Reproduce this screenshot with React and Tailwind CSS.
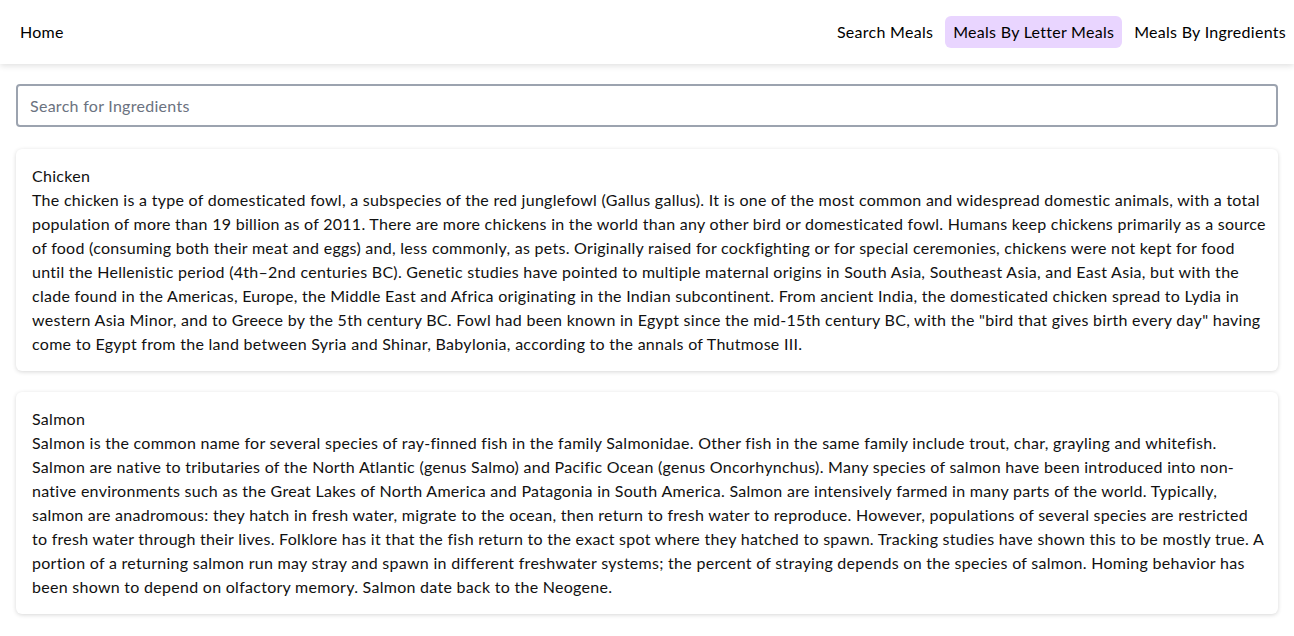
import React from "react";

const chicken = [
  "The chicken is a type of domesticated fowl, a subspecies of the red junglefowl (Gallus gallus). It is one of the most common and widespread domestic animals, with a total",
  "population of more than 19 billion as of 2011. There are more chickens in the world than any other bird or domesticated fowl. Humans keep chickens primarily as a source",
  "of food (consuming both their meat and eggs) and, less commonly, as pets. Originally raised for cockfighting or for special ceremonies, chickens were not kept for food",
  "until the Hellenistic period (4th\u20132nd centuries BC). Genetic studies have pointed to multiple maternal origins in South Asia, Southeast Asia, and East Asia, but with the",
  "clade found in the Americas, Europe, the Middle East and Africa originating in the Indian subcontinent. From ancient India, the domesticated chicken spread to Lydia in",
  "western Asia Minor, and to Greece by the 5th century BC. Fowl had been known in Egypt since the mid-15th century BC, with the \"bird that gives birth every day\" having",
  "come to Egypt from the land between Syria and Shinar, Babylonia, according to the annals of Thutmose III.",
];

const salmon = [
  "Salmon is the common name for several species of ray-finned fish in the family Salmonidae. Other fish in the same family include trout, char, grayling and whitefish.",
  "Salmon are native to tributaries of the North Atlantic (genus Salmo) and Pacific Ocean (genus Oncorhynchus). Many species of salmon have been introduced into non-",
  "native environments such as the Great Lakes of North America and Patagonia in South America. Salmon are intensively farmed in many parts of the world. Typically,",
  "salmon are anadromous: they hatch in fresh water, migrate to the ocean, then return to fresh water to reproduce. However, populations of several species are restricted",
  "to fresh water through their lives. Folklore has it that the fish return to the exact spot where they hatched to spawn. Tracking studies have shown this to be mostly true. A",
  "portion of a returning salmon run may stray and spawn in different freshwater systems; the percent of straying depends on the species of salmon. Homing behavior has",
  "been shown to depend on olfactory memory. Salmon date back to the Neogene.",
];

function Card({ title, lines }) {
  return (
    <div className="bg-white rounded-md shadow-[0_1px_4px_rgba(0,0,0,0.16)] px-4 py-[15px] text-[#111] text-base leading-6">
      <div>{title}</div>
      {lines.map((l, i) => (
        <div key={i} className="whitespace-nowrap">{l}</div>
      ))}
    </div>
  );
}

export default function App() {
  return (
    <div className="min-h-screen bg-white tracking-[0.28px]" style={{ fontFamily: "'Lato', 'Open Sans', sans-serif" }}>
      <nav className="h-16 flex items-center justify-between shadow-[0_2px_6px_rgba(0,0,0,0.12)] pl-3 text-base text-black">
        <a className="px-2 py-1">Home</a>
        <div className="flex items-center gap-1">
          <a className="px-2 py-1 rounded-md">Search Meals</a>
          <a className="px-2 py-1 rounded-md bg-[#e9d5ff]">Meals By Letter Meals</a>
          <a className="px-2 py-1 rounded-md">Meals By Ingredients</a>
        </div>
      </nav>
      <div className="px-4 pt-5">
        <input
          className="w-full h-[43px] border-2 border-[#9ca3af] rounded px-3 text-base outline-none placeholder:text-[#6b7280] tracking-[0.28px]"
          placeholder="Search for Ingredients"
        />
        <div className="mt-[22px] flex flex-col gap-[21px]">
          <Card title="Chicken" lines={chicken} />
          <Card title="Salmon" lines={salmon} />
        </div>
      </div>
    </div>
  );
}
